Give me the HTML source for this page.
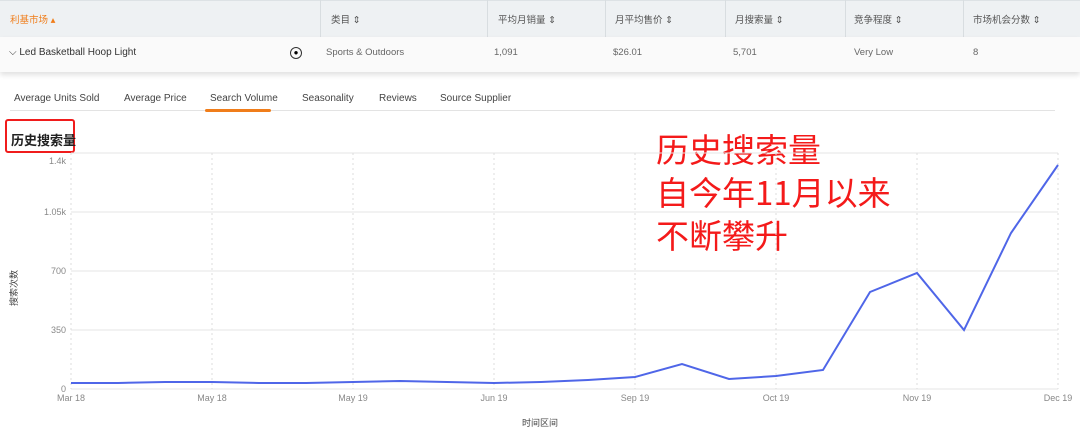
<!DOCTYPE html>
<html><head><meta charset="utf-8"><style>
body{margin:0;width:1080px;height:437px;background:#fff;font-family:"Liberation Sans","Noto Sans CJK SC",sans-serif;position:relative;overflow:hidden}
.a{position:absolute;white-space:nowrap}
.hd{position:absolute;top:0;left:0;width:1080px;height:37px;background:#eef1f3;border-top:1px solid #dde2e5;box-sizing:border-box}
.rw{position:absolute;top:37px;left:0;width:1080px;height:35px;background:#fafafa;box-shadow:0 3px 5px rgba(0,0,0,.12)}
.vl{position:absolute;top:0;width:1px;height:37px;background:#d8dde0}
.h{font-size:9.5px;color:#555;top:12px}
.c{font-size:9.5px;color:#666;top:47px}
.t{font-size:10px;color:#444;top:93px}
</style></head><body>
<div class="hd"></div>
<div class="vl" style="left:320px"></div><div class="vl" style="left:487px"></div><div class="vl" style="left:605px"></div><div class="vl" style="left:725px"></div><div class="vl" style="left:845px"></div><div class="vl" style="left:963px"></div>
<div class="a h" style="left:10px;color:#f07d1a">利基市场 ▴</div>
<div class="a h" style="left:331px">类目 ⇕</div>
<div class="a h" style="left:498px">平均月销量 ⇕</div>
<div class="a h" style="left:615px">月平均售价 ⇕</div>
<div class="a h" style="left:735px">月搜索量 ⇕</div>
<div class="a h" style="left:854px">竞争程度 ⇕</div>
<div class="a h" style="left:973px">市场机会分数 ⇕</div>
<div class="rw"></div>
<div class="a" style="left:9px;top:47px;font-size:10px;color:#333">⌵ Led Basketball Hoop Light</div>
<div class="a" style="left:290px;top:47px;width:10px;height:10px;border:1.3px solid #333;border-radius:50%;font-size:8px;line-height:10px;text-align:center">●</div>
<div class="a c" style="left:326px">Sports &amp; Outdoors</div>
<div class="a c" style="left:494px">1,091</div>
<div class="a c" style="left:613px">$26.01</div>
<div class="a c" style="left:733px">5,701</div>
<div class="a c" style="left:854px">Very Low</div>
<div class="a c" style="left:973px">8</div>
<div class="a t" style="left:14px">Average Units Sold</div>
<div class="a t" style="left:124px">Average Price</div>
<div class="a t" style="left:210px">Search Volume</div>
<div class="a t" style="left:302px">Seasonality</div>
<div class="a t" style="left:379px">Reviews</div>
<div class="a t" style="left:440px">Source Supplier</div>
<div class="a" style="left:10px;top:110px;width:1045px;height:1px;background:#e3e3e3"></div>
<div class="a" style="left:205px;top:109px;width:66px;height:3px;background:#f07d1a;border-radius:2px"></div>
<div class="a" style="left:5px;top:119px;width:70px;height:34px;border:2.5px solid #f01c1c;border-radius:3px;box-sizing:border-box"></div>
<div class="a" style="left:11px;top:130px;font-size:13px;font-weight:bold;color:#222">历史搜索量</div>
<div class="a" style="left:656px;top:127px;font-size:33px;line-height:43px;color:#f41a1a;font-family:'Noto Sans CJK SC',sans-serif">历史搜索量<br>自今年11月以来<br>不断攀升</div>
<svg class="a" style="left:0;top:0" width="1080" height="437">
<g stroke="#e4e4e4" stroke-width="1">
<line x1="71" y1="153" x2="1058" y2="153"/><line x1="71" y1="212" x2="1058" y2="212"/><line x1="71" y1="271" x2="1058" y2="271"/><line x1="71" y1="330" x2="1058" y2="330"/><line x1="71" y1="389" x2="1058" y2="389"/>
</g>
<g stroke="#ddd" stroke-dasharray="2,3"><line x1="71" y1="153" x2="71" y2="389"/><line x1="212" y1="153" x2="212" y2="389"/><line x1="353" y1="153" x2="353" y2="389"/><line x1="494" y1="153" x2="494" y2="389"/><line x1="635" y1="153" x2="635" y2="389"/><line x1="776" y1="153" x2="776" y2="389"/><line x1="917" y1="153" x2="917" y2="389"/><line x1="1058" y1="153" x2="1058" y2="389"/></g>
<g font-size="9" fill="#888" text-anchor="end" font-family="Liberation Sans">
<text x="66" y="164">1.4k</text><text x="66" y="215">1.05k</text><text x="66" y="274">700</text><text x="66" y="333">350</text><text x="66" y="392">0</text></g>
<g font-size="9" fill="#888" text-anchor="middle" font-family="Liberation Sans">
<text x="71" y="401">Mar 18</text><text x="212" y="401">May 18</text><text x="353" y="401">May 19</text><text x="494" y="401">Jun 19</text><text x="635" y="401">Sep 19</text><text x="776" y="401">Oct 19</text><text x="917" y="401">Nov 19</text><text x="1058" y="401">Dec 19</text>
<text x="540" y="426" fill="#444">时间区间</text></g>
<text x="0" y="0" font-size="9" fill="#444" transform="translate(17,288) rotate(-90)" text-anchor="middle">搜索次数</text>
<polyline fill="none" stroke="#4f66e8" stroke-width="2" points="71,383 118,383 165,382 212,382 259,383 306,383 353,382 400,381 447,382 494,383 541,382 588,380 635,377 682,364 729,379 776,376 823,370 870,292 917,273 964,330 1011,233 1058,165"/>
</svg>
</body></html>
